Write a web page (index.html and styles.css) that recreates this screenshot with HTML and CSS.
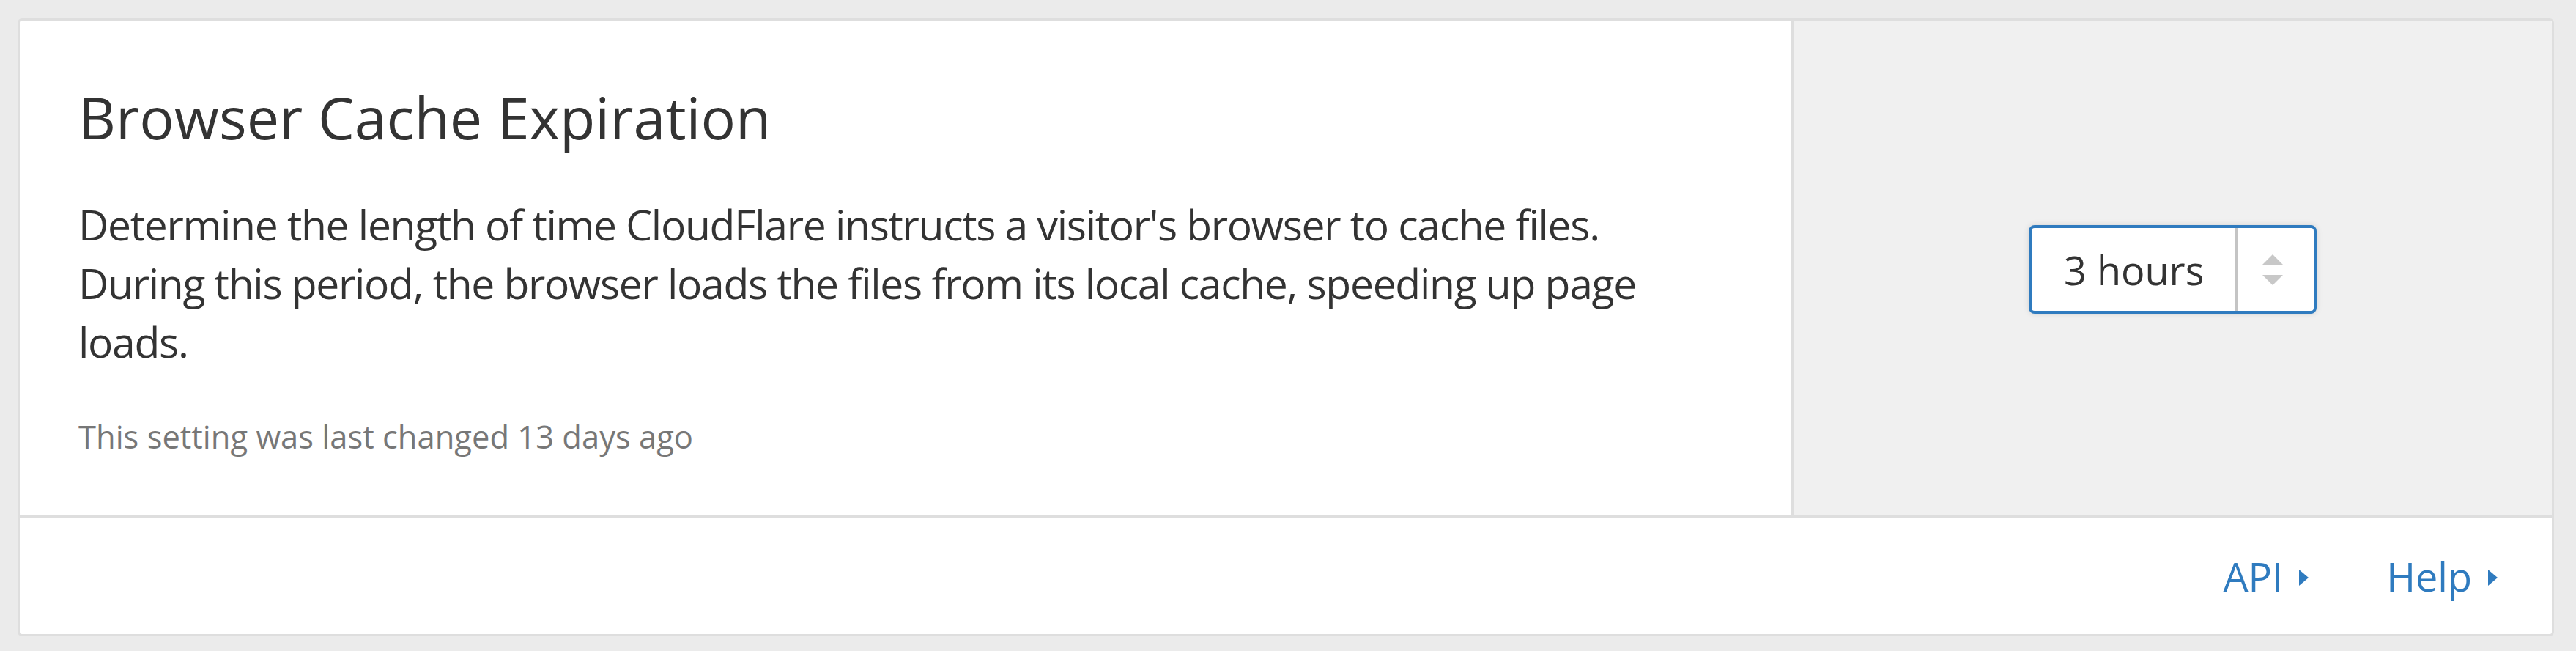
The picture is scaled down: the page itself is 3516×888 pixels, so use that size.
FILE: index.html
```html
<!DOCTYPE html>
<html lang="en">
<head>
  <meta charset="UTF-8">
  <title>Browser Cache Expiration</title>
  <link rel="stylesheet" href="styles.css">
</head>
<body>
  <div class="card">
    <div class="card-main">
      <div class="card-info">
        <h3 class="card-title">Browser Cache Expiration</h3>
        <p class="card-desc">Determine the length of time CloudFlare instructs a visitor's browser to cache files. During this period, the browser loads the files from its local cache, speeding up page loads.</p>
        <p class="card-meta">This setting was last changed 13 days ago</p>
      </div>
      <div class="card-control">
        <div class="select">
          <span class="select-value">3 hours</span>
          <span class="select-arrows">
            <span class="arrow-up"></span>
            <span class="arrow-down"></span>
          </span>
        </div>
      </div>
    </div>
    <div class="card-footer">
      <a class="footer-link" href="#">API<span class="caret"></span></a>
      <a class="footer-link" href="#">Help<span class="caret"></span></a>
    </div>
  </div>
</body>
</html>
```

FILE: styles.css
```css
body {
  margin: 0;
  padding: 25px 30px 20px 24px;
  background: #ebebeb;
  font-family: "Open Sans", "Liberation Sans", sans-serif;
  color: #333;
}

.card {
  background: #fff;
  border: 3px solid #dedede;
  border-radius: 6px;
}

.card-main {
  display: flex;
  height: 675px;
}

.card-info {
  flex: 1;
  padding: 84px 80px 0 80px;
}

.card-title {
  margin: 0;
  font-size: 79px;
  font-weight: 400;
  line-height: 96px;
  color: #333;
}

.card-desc {
  margin: 58px 0 0;
  max-width: 2280px;
  font-size: 57px;
  letter-spacing: -1.3px;
  line-height: 80px;
}

.card-meta {
  margin: 60px 0 0;
  font-size: 43.5px;
  line-height: 60px;
  color: #777;
}

.card-control {
  width: 1035px;
  background: #f0f0f0;
  border-left: 3px solid #dedede;
  border-top-right-radius: 4px;
  display: flex;
  align-items: center;
  justify-content: center;
}

.select {
  display: flex;
  width: 393px;
  height: 121px;
  box-sizing: border-box;
  background: #fff;
  border: 4px solid #2f7bbf;
  border-radius: 8px;
  box-shadow: 0 0 8px rgba(0, 0, 0, 0.12);
  margin-top: 4px;
}

.select-value {
  flex: 1;
  display: flex;
  align-items: center;
  padding-left: 44px;
  font-size: 54px;
  color: #333;
  border-right: 4px solid #c4c4c4;
}

.select-arrows {
  width: 104px;
  display: flex;
  flex-direction: column;
  align-items: center;
  justify-content: center;
  gap: 14px;
  padding-right: 8px;
  box-sizing: border-box;
}

.arrow-up {
  border-left: 14px solid transparent;
  border-right: 14px solid transparent;
  border-bottom: 14px solid #c8c8c8;
}

.arrow-down {
  border-left: 14px solid transparent;
  border-right: 14px solid transparent;
  border-top: 14px solid #c8c8c8;
}

.card-footer {
  height: 159px;
  border-top: 3px solid #dedede;
  display: flex;
  align-items: center;
  justify-content: flex-end;
  gap: 106px;
  padding-right: 74px;
}

.footer-link {
  display: flex;
  align-items: center;
  font-size: 54px;
  color: #2f7bbf;
  text-decoration: none;
}

.caret {
  margin-left: 22px;
  margin-top: 4px;
  border-left: 13px solid #2f7bbf;
  border-top: 11px solid transparent;
  border-bottom: 11px solid transparent;
}
```
